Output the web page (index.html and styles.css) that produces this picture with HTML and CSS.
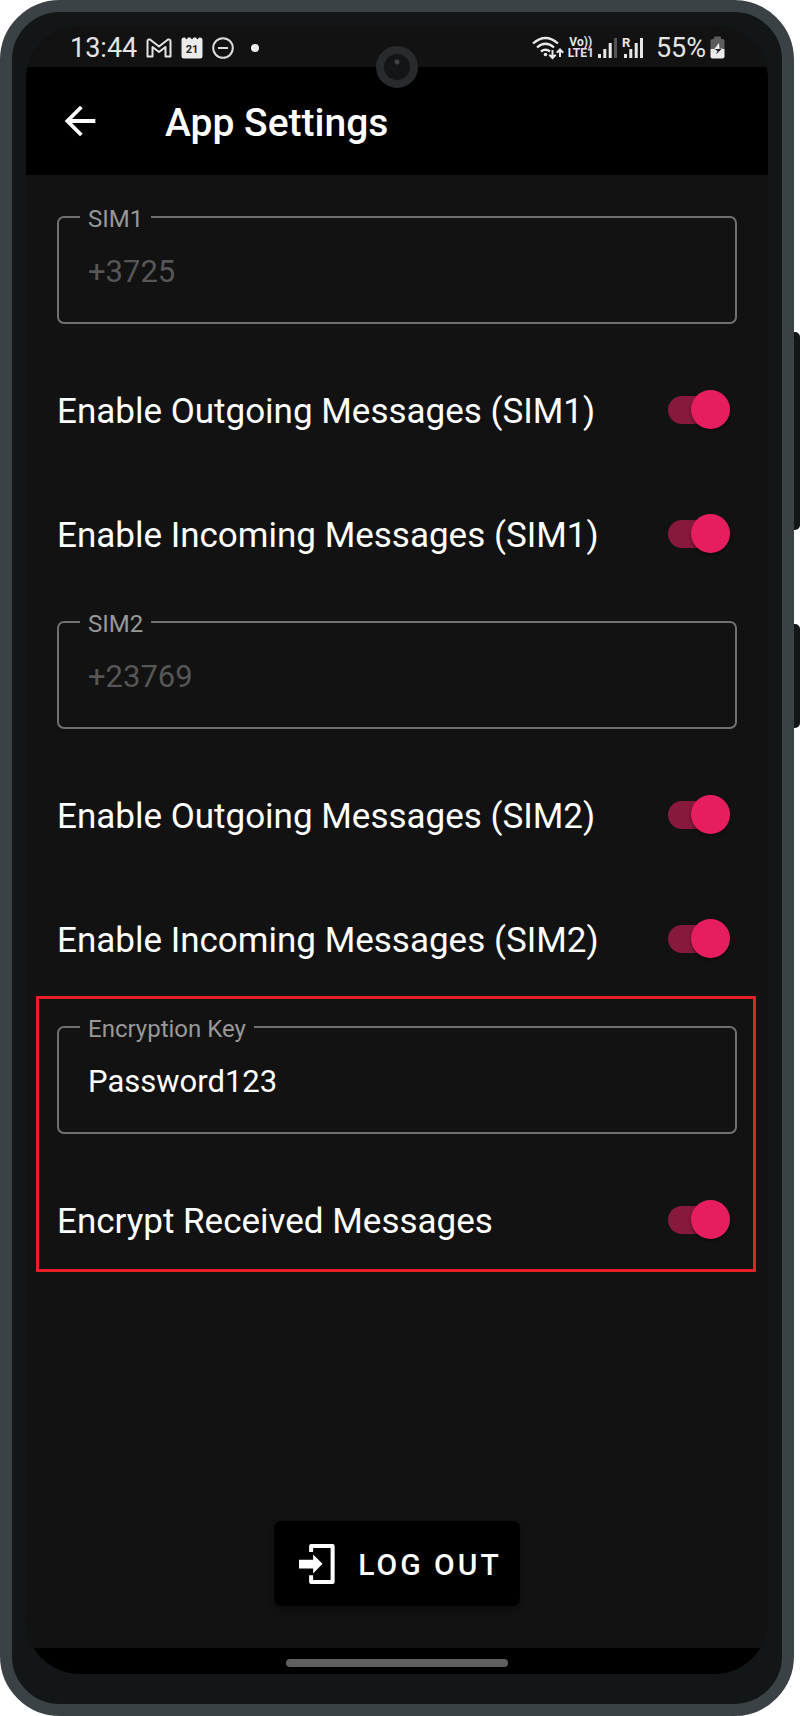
FILE: index.html
```html
<!DOCTYPE html>
<html lang="en">
<head>
<meta charset="utf-8">
<meta name="viewport" content="width=device-width, initial-scale=1">
<title>App Settings</title>
<link rel="stylesheet" href="styles.css">
</head>
<body>
<div class="device">
  <span class="side-key side-key-volume"></span>
  <span class="side-key side-key-power"></span>
  <span class="camera"></span>
  <div class="screen">
    <div class="status-bar">
      <div class="status-left">
        <span class="status-text">13:44</span>
        <svg class="gmail" width="26" height="20" viewBox="0 0 26 20" fill="none" stroke="#e4e4e4" stroke-width="2" stroke-linejoin="round"><path d="M1.500 18.500V3.500Q1.500 1 4 1.500L13 8.500 22 1.500Q24.500 1 24.500 3.500V18.500H19.500V9L13 14 6.500 9V18.500Z"/></svg>
        <svg class="calendar" width="22" height="23" viewBox="0 0 22 23"><path fill="#ececec" d="M3 1.500H4Q5.500 5 7 1.500H9.500Q11 5 12.500 1.500H15Q16.500 5 18 1.500H19Q21.500 1.500 21.500 4V20Q21.500 22.500 19 22.500H3Q.5 22.500 .5 20V4Q.5 1.500 3 1.500Z"/><text class="calendar-day" x="11" y="17" text-anchor="middle">21</text></svg>
        <svg class="dnd" width="22" height="22" viewBox="0 0 22 22" fill="none" stroke="#dcdcdc" stroke-width="2"><circle cx="11" cy="11" r="9.800"/><path d="M6 11H16"/></svg>
        <span class="dot"></span>
      </div>
      <div class="status-right">
        <svg class="wifi" width="32" height="24" viewBox="0 0 32 24" fill="none" stroke="#e8e8e8" stroke-width="2.300"><path d="M1 7.500Q13.500-3.500 26 7.500M5 11.500Q13.500 4 22 11.500M9 15.500Q13.500 12 18 15.500"/><circle cx="13.500" cy="18.500" r="1.800" fill="#e8e8e8" stroke="none"/><path stroke-width="2" d="M20.500 14V21.500M17.300 18.800L20.500 22 23.700 18.800M28 21V14M24.800 16.700L28 13.500 31.200 16.700"/></svg>
        <span class="volte"><span>Vo))</span><span>LTE1</span></span>
        <svg class="signal" width="20" height="22" viewBox="0 0 20 22"><g fill="#e8e8e8"><rect x="0" y="17" width="3" height="4"/><rect x="5.300" y="12" width="3" height="9"/><rect x="10.700" y="6" width="3" height="15"/></g><rect x="16" y="1" width="3" height="20" fill="#555"/></svg>
        <svg class="signal-roaming" width="22" height="26" viewBox="0 -2 22 26"><g fill="#e8e8e8"><rect x="2" y="17" width="3" height="4"/><rect x="7.300" y="12" width="3" height="9"/><rect x="12.700" y="6" width="3" height="15"/><rect x="18" y="1" width="3" height="20"/></g><text class="roaming" x="0" y="10">R</text></svg>
        <span class="status-text">55%</span>
        <svg class="battery" width="15" height="23" viewBox="0 0 15 23"><path fill="#5c5c5c" d="M4 1.500Q4 .5 5 .5H10Q11 .5 11 1.500V3H12.500Q14.500 3 14.500 5V13H.5V5Q.5 3 2.500 3H4Z"/><path fill="#ececec" d="M.5 13H14.500V20.500Q14.500 22.500 12.500 22.500H2.500Q.5 22.500 .5 20.500Z"/><path fill="#ececec" d="M9 7L3.500 14H14L11.500 12H9.500Z"/><path fill="#1c1c1c" d="M6 18.500L12 12.500H9L9.500 13H4.500L7.500 15Z"/></svg>
      </div>
    </div>

    <header class="app-bar">
      <button class="back" type="button" aria-label="Back"><svg width="46" height="46" viewBox="0 0 24 24"><path fill="#fff" d="M20 11H7.830l5.590-5.590L12 4l-8 8 8 8 1.410-1.410L7.830 13H20z"/></svg></button>
      <h1 class="title">App Settings</h1>
    </header>

    <main class="content">
      <section class="group">
        <div class="field"><label class="field-label" for="sim1">SIM1</label><input class="field-input" id="sim1" type="tel" value="+3725" disabled></div>
        <label class="row"><span class="row-text">Enable Outgoing Messages (SIM1)</span><input class="switch" type="checkbox" role="switch" checked></label>
        <label class="row"><span class="row-text">Enable Incoming Messages (SIM1)</span><input class="switch" type="checkbox" role="switch" checked></label>
      </section>
      <section class="group">
        <div class="field"><label class="field-label" for="sim2">SIM2</label><input class="field-input" id="sim2" type="tel" value="+23769" disabled></div>
        <label class="row"><span class="row-text">Enable Outgoing Messages (SIM2)</span><input class="switch" type="checkbox" role="switch" checked></label>
        <label class="row"><span class="row-text">Enable Incoming Messages (SIM2)</span><input class="switch" type="checkbox" role="switch" checked></label>
      </section>
      <section class="group group-marked">
        <div class="field"><label class="field-label" for="key">Encryption Key</label><input class="field-input" id="key" type="text" value="Password123"></div>
        <label class="row"><span class="row-text">Encrypt Received Messages</span><input class="switch" type="checkbox" role="switch" checked></label>
      </section>
      <button class="logout" type="button">
        <svg width="36" height="40" viewBox="0 0 107 119"><path fill="none" stroke="#fff" stroke-width="12" stroke-linejoin="round" d="M36 24V6H100V113H36V93"/><path fill="#fff" d="M0 47H42V31L70 59 42 88V73H0Z"/></svg>
        <span class="logout-text">LOG OUT</span>
      </button>
    </main>

    <footer class="nav-bar"><span class="nav-pill"></span></footer>
  </div>
</div>
</body>
</html>
```
FILE: styles.css
```css
* {
  box-sizing: border-box;
}

body {
  margin: 0;
  padding-right: 6px;
  background: #fff;
  color: #fff;
  font-family: Roboto, "Liberation Sans", sans-serif;
}

.device {
  position: relative;
  display: flex;
  min-height: 100vh;
  padding: 14px 14px 30px;
  border: 12px solid #3b4245;
  border-radius: 60px;
  background: #121616;
}

.side-key {
  position: absolute;
  right: -18px;
  width: 6px;
  border-radius: 0 5px 5px 0;
  background: #121616;
}

.side-key-volume {
  top: 320px;
  height: 198px;
}

.side-key-power {
  top: 612px;
  height: 104px;
}

.camera {
  position: absolute;
  z-index: 1;
  top: 34px;
  left: 50%;
  width: 42px;
  height: 42px;
  margin-left: -21px;
  border: 8px solid #272b2d;
  border-radius: 50%;
  background: radial-gradient(circle at 13px 8px, #404344 2px, #121616 3px);
}

.screen {
  display: flex;
  flex: 1;
  flex-direction: column;
  overflow: hidden;
  border-radius: 54px;
  background: #121212;
}

.status-bar {
  display: flex;
  justify-content: space-between;
  align-items: center;
  height: 41px;
  padding: 2px 43px 0 44px;
}

.status-left,
.status-right {
  display: flex;
  align-items: center;
}

.status-left {
  gap: 9px;
}

.status-right {
  gap: 4px;
}

.status-text {
  color: #e4e4e4;
  font-size: 27px;
  line-height: 32px;
}

.calendar-day {
  fill: #222;
  font-size: 11px;
  font-weight: 700;
}

.dot {
  width: 8px;
  height: 8px;
  margin-left: 8px;
  border-radius: 50%;
  background: #ececec;
}

.volte {
  display: flex;
  flex-direction: column;
  align-items: center;
  color: #e4e4e4;
  font-size: 12px;
  font-weight: 700;
  line-height: 11px;
}

.roaming {
  fill: #e8e8e8;
  stroke: #121212;
  stroke-width: 2px;
  paint-order: stroke;
  font-size: 13px;
  font-weight: 700;
}

.status-right .status-text {
  margin-left: 8px;
}

.app-bar {
  display: flex;
  align-items: center;
  gap: 62px;
  height: 108px;
  padding: 0 31px;
  background: #000;
}

.back {
  display: flex;
  padding: 0;
  border: 0;
  background: none;
}

.title {
  margin: 4px 0 0;
  font-size: 39px;
  font-weight: 500;
  line-height: 44px;
}

.content {
  display: flex;
  flex: 1;
  flex-direction: column;
  padding: 16px 31px 42px;
}

.group {
  position: relative;
  padding-top: 25px;
}

.group-marked::after {
  content: "";
  position: absolute;
  inset: -5px -19px 10px -21px;
  border: 3px solid #e61f27;
  pointer-events: none;
}

.field {
  position: relative;
  margin-bottom: 24px;
}

.field-label {
  position: absolute;
  top: -11px;
  left: 23px;
  padding: 0 8px;
  background: #121212;
  color: #989898;
  font-size: 24px;
  line-height: 28px;
}

.field-input {
  display: block;
  width: 100%;
  height: 108px;
  padding: 2px 29px 0;
  border: 2px solid #707070;
  border-radius: 7px;
  outline: 0;
  background: transparent;
  color: #fff;
  font-family: inherit;
  font-size: 31px;
}

.field-input:disabled {
  color: #565656;
}

.row {
  display: flex;
  align-items: center;
  justify-content: space-between;
  height: 124px;
  padding-right: 7px;
  font-size: 35px;
  line-height: 40px;
}

.row-text {
  padding-top: 4px;
}

.switch {
  position: relative;
  flex: none;
  width: 62px;
  height: 40px;
  margin: 0;
  appearance: none;
}

.switch::before,
.switch::after {
  content: "";
  position: absolute;
}

.switch::before {
  inset: 6px 8px 6px 0;
  border-radius: 14px;
  background: #86193c;
}

.switch::after {
  top: 0;
  right: 0;
  width: 39px;
  height: 39px;
  border-radius: 50%;
  background: #e61e60;
  box-shadow: 0 2px 3px rgba(0, 0, 0, 0.4);
}

.logout {
  display: flex;
  align-items: center;
  align-self: center;
  gap: 23px;
  height: 85px;
  margin-top: auto;
  padding: 0 18px 0 25px;
  border: 0;
  border-radius: 7px;
  background: #000;
  box-shadow: 0 3px 6px rgba(0, 0, 0, 0.3);
  color: #fff;
  font-family: inherit;
  font-size: 30px;
  font-weight: 500;
  letter-spacing: 3px;
}

.logout-text {
  padding-top: 2px;
}

.nav-bar {
  display: flex;
  align-items: center;
  justify-content: center;
  height: 26px;
  padding-top: 4px;
  background: #000;
}

.nav-pill {
  width: 30%;
  height: 8px;
  border-radius: 4px;
  background: #5f5f5f;
}
```
